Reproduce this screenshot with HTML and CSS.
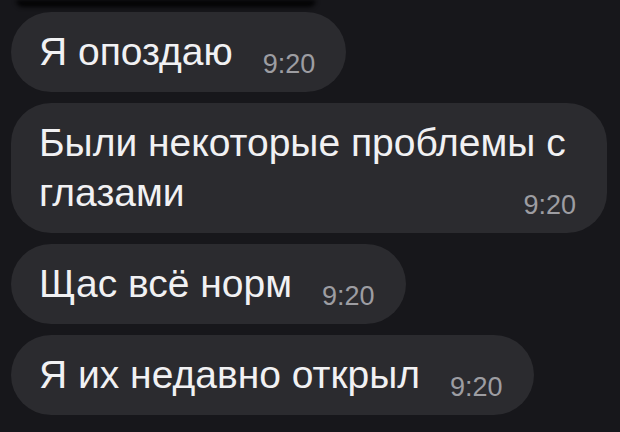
FILE: index.html
```html
<!DOCTYPE html>
<html lang="ru">
<head>
  <meta charset="UTF-8" />
  <meta name="viewport" content="width=device-width, initial-scale=1.0" />
  <title>Чат</title>
  <link rel="stylesheet" href="styles.css">
</head>
<body>
  <div class="top-shade"></div>
  <main class="chat">
    <div class="bubble">Я опоздаю<span class="time">9:20</span></div>
    <div class="bubble">Были некоторые проблемы с глазами<span class="time">9:20</span></div>
    <div class="bubble">Щас всё норм<span class="time">9:20</span></div>
    <div class="bubble">Я их недавно открыл<span class="time">9:20</span></div>
  </main>
</body>
</html>
```

FILE: styles.css
```css
body {
  margin: 0;
  background-color: #17171b;
  font-family: 'Liberation Sans', Arial, sans-serif;
  color: #f1f1f3;
  overflow: hidden;
}

.top-shade {
  height: 7px;
  width: 300px;
  margin-left: 16px;
  background: #030304;
  border-radius: 0 0 30px 30px;
  filter: blur(2px);
}

.chat {
  display: flex;
  flex-direction: column;
  align-items: flex-start;
  gap: 11px;
  padding: 5px 11px 0;
}

.bubble {
  max-width: 596px;
  box-sizing: border-box;
  padding: 15px 31px 15px 28px;
  border-radius: 40px;
  background-color: #2b2b2f;
  font-size: 39px;
  line-height: 50px;
}

.time {
  float: right;
  margin: 27px 0 0 30px;
  font-size: 27px;
  line-height: 20px;
  color: #9d9da2;
}
```
